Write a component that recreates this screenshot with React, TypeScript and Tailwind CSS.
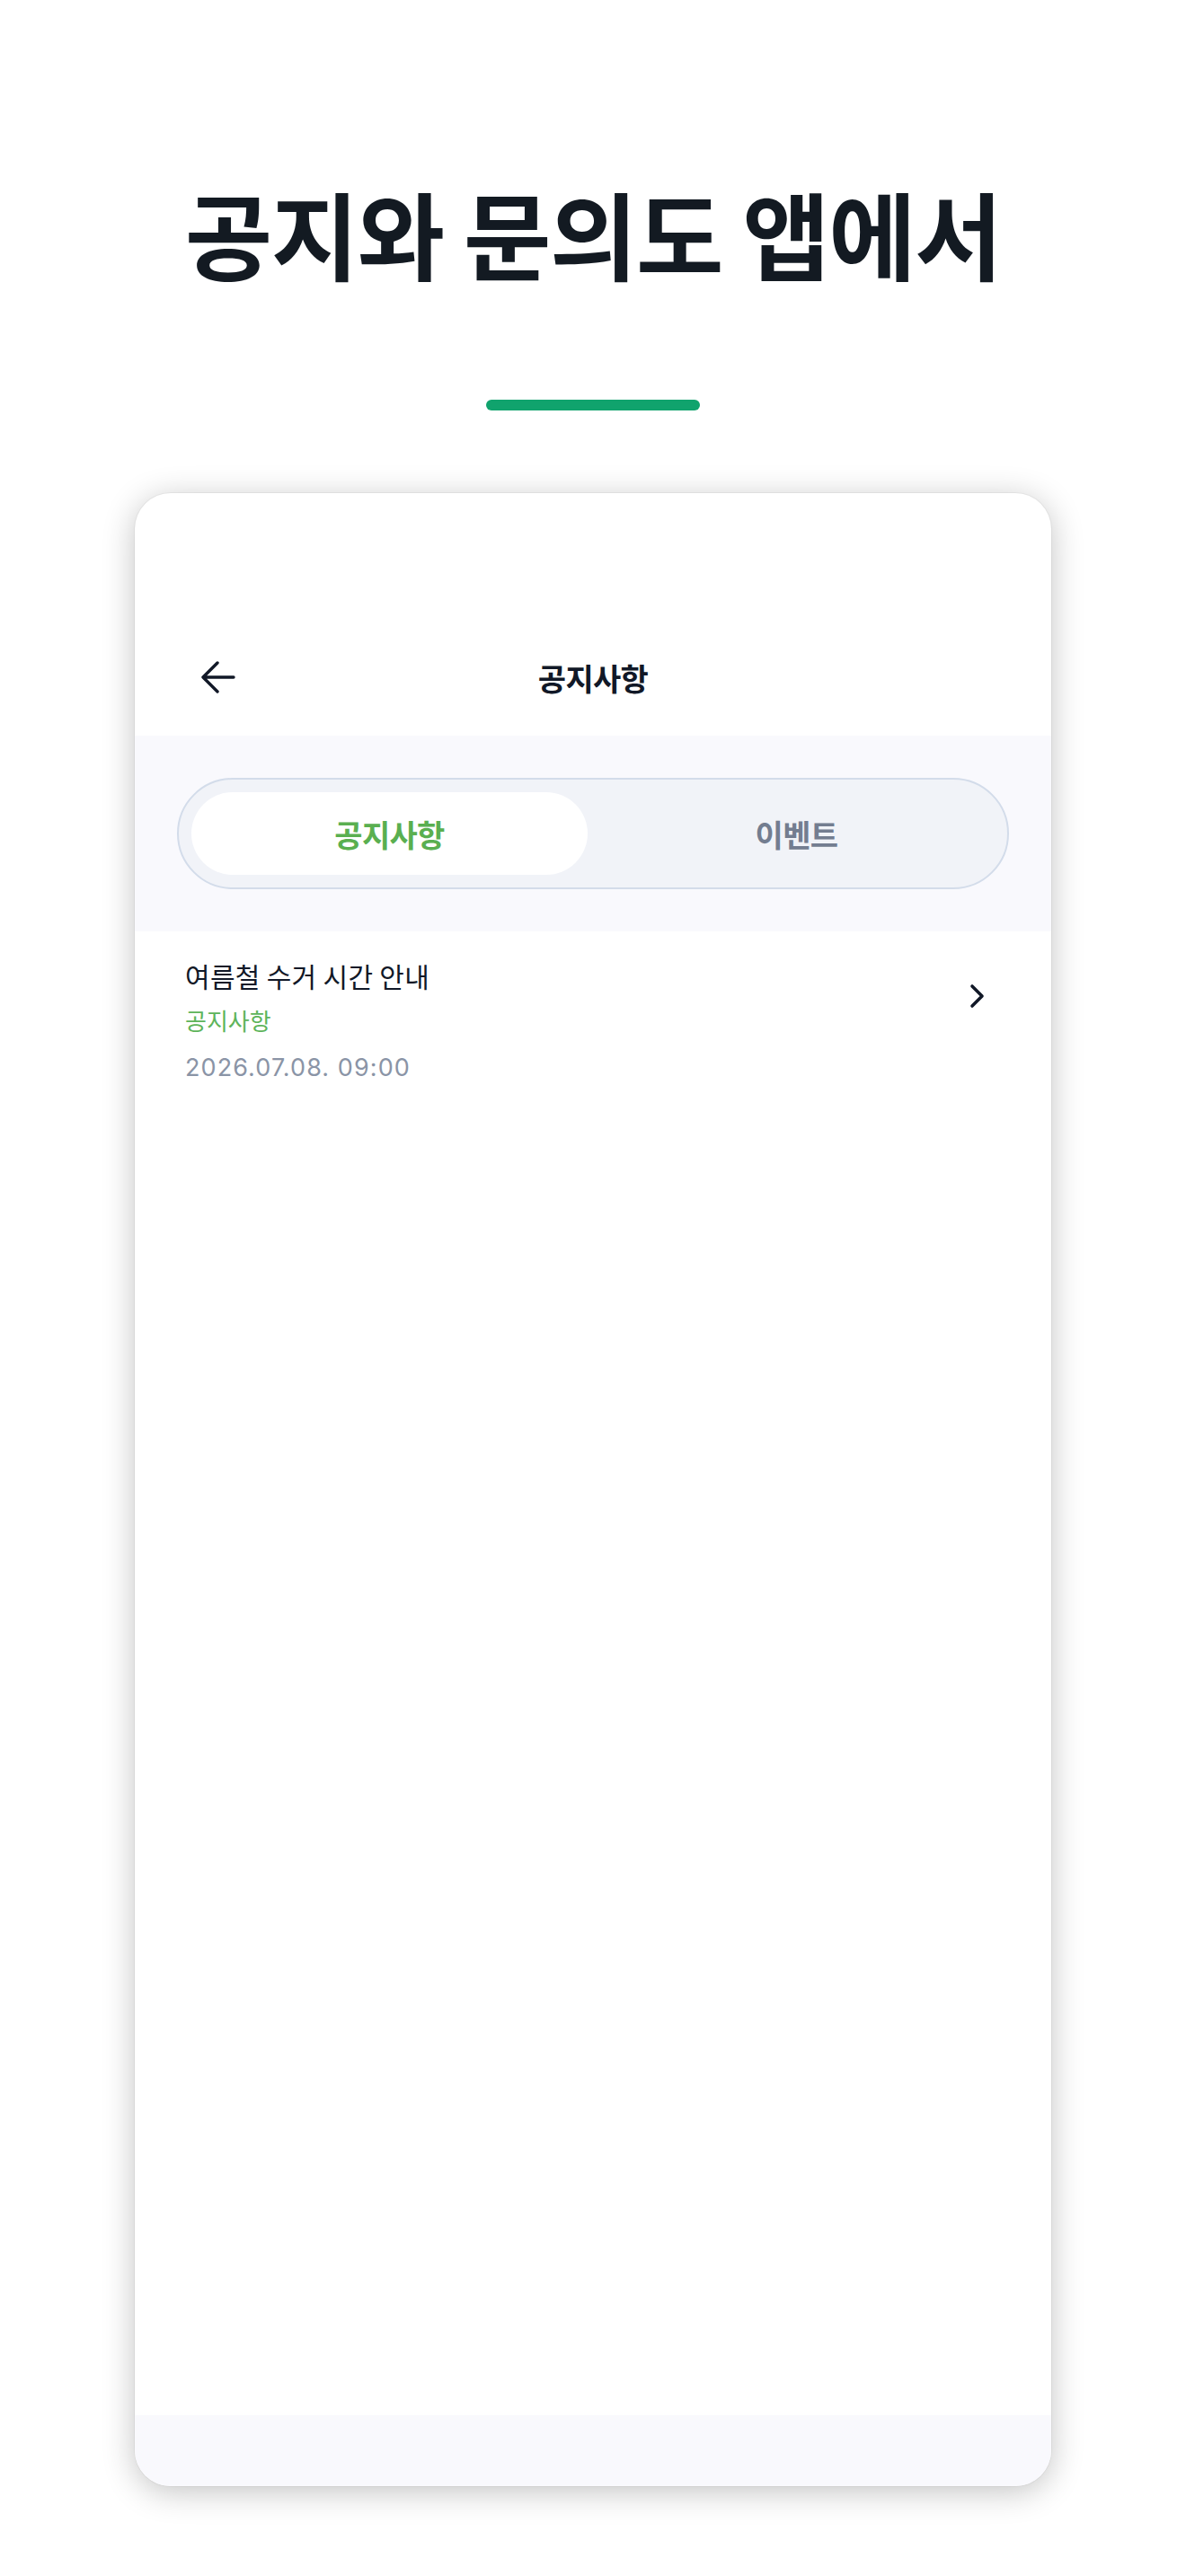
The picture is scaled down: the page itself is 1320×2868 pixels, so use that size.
import React from 'react';

const sans = { fontFamily: '"Noto Sans CJK KR", "Noto Sans", sans-serif' };

function BackArrow() {
  return (
    <svg width="40" height="40" viewBox="0 0 40 40" fill="none">
      <path d="M37 20H4M19 4L3 20l16 16" stroke="#111827" strokeWidth="3.4" strokeLinecap="round" strokeLinejoin="round" />
    </svg>
  );
}

function Chevron() {
  return (
    <svg width="20" height="28" viewBox="0 0 20 28" fill="none">
      <path d="M4 3l11 11L4 25" stroke="#111827" strokeWidth="3.6" strokeLinecap="round" strokeLinejoin="round" />
    </svg>
  );
}

export default function App() {
  return (
    <div className="w-[1320px] h-[2868px] bg-white flex flex-col items-center overflow-hidden" style={sans}>
      {/* headline */}
      <h1 className="pt-[205px] text-[106px] leading-[106px] font-bold text-[#131a22] tracking-[-0.015em]">
        공지와 문의도 앱에서
      </h1>
      <div className="mt-[134px] w-[238px] h-[12px] rounded-full bg-[#10a36d]" />

      {/* phone mockup */}
      <div className="mt-[92px] w-[1020px] h-[2219px] bg-white rounded-[40px] overflow-hidden flex flex-col shadow-[0_0_0_1px_rgba(0,0,0,0.04),0_6px_36px_rgba(0,0,0,0.24)]">
        <div className="h-[140px]" />
        <div className="h-[130px] relative flex items-center justify-center">
          <div className="absolute left-[73px] top-1/2 -translate-y-1/2">
            <BackArrow />
          </div>
          <span className="text-[34px] font-bold text-[#111827] tracking-[-0.02em]">공지사항</span>
        </div>

        <div className="h-[218px] bg-[#f9f9fd] px-[47px] py-[47px]">
          <div className="h-[124px] rounded-full border-2 border-[#d3dcea] bg-[#f1f3f8] p-[14px] grid grid-cols-2 gap-[12px]">
            <div className="rounded-full bg-white flex items-center justify-center">
              <span className="text-[34px] font-bold text-[#5aaf50] tracking-[-0.02em]">공지사항</span>
            </div>
            <div className="rounded-full flex items-center justify-center">
              <span className="text-[34px] font-bold text-[#737d90] tracking-[-0.02em]">이벤트</span>
            </div>
          </div>
        </div>

        <div className="flex items-start pl-[56px] pr-[72px] pt-[28px]">
          <div className="flex-1 flex flex-col">
            <span className="text-[30px] leading-[42px] text-[#111827] tracking-[0.01em]">여름철 수거 시간 안내</span>
            <span className="mt-[12px] text-[26px] leading-[34px] text-[#5db45a]">공지사항</span>
            <span className="mt-[18px] text-[27px] leading-[36px] text-[#8a94a6] tracking-[0.04em]" style={{ fontFamily: 'Inter, "Noto Sans", sans-serif' }}>
              2026.07.08. 09:00
            </span>
          </div>
          <div className="mt-[30px]">
            <Chevron />
          </div>
        </div>

        <div className="flex-1" />
        <div className="h-[79px] bg-[#f9f9fd]" />
      </div>
    </div>
  );
}
